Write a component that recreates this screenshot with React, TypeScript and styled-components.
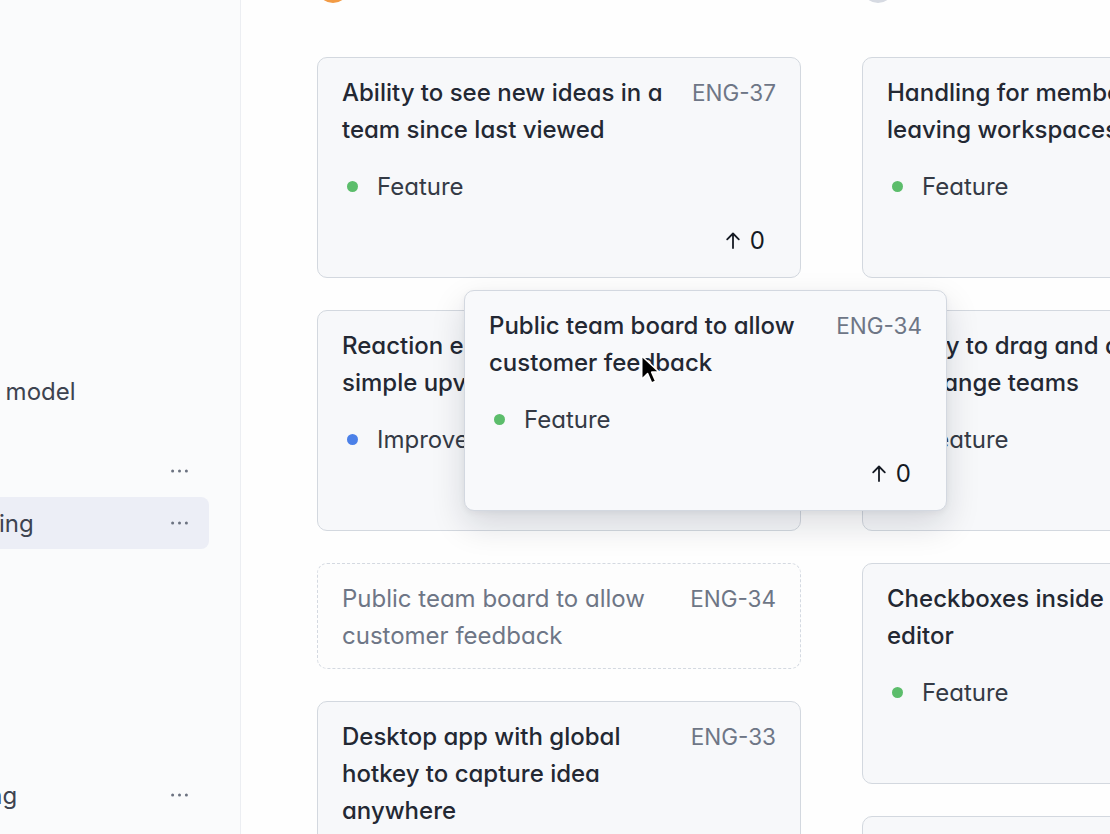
import React from 'react';
import styled, { createGlobalStyle } from 'styled-components';

const Global = createGlobalStyle`
  html, body { margin: 0; padding: 0; background: #fefefe; }
  body { font-family: Inter, "Liberation Sans", sans-serif; -webkit-font-smoothing: antialiased; }
  * { box-sizing: border-box; }
`;

const Shell = styled.div`
  position: relative;
  display: flex;
  width: 1110px;
  height: 834px;
  overflow: hidden;
  font-family: Inter, "Liberation Sans", sans-serif;
  font-feature-settings: "cv11";
`;

const Sidebar = styled.aside`
  flex: 0 0 241px;
  background: #fafbfc;
  border-right: 1px solid #eceef2;
  overflow: hidden;
`;

const Nav = styled.nav`
  margin-left: -95px;
  width: 304px;
  padding-top: 365px;
  display: flex;
  flex-direction: column;
`;

const NavRow = styled.div<{ $active?: boolean; $gap?: number }>`
  display: flex;
  align-items: center;
  justify-content: space-between;
  height: 52px;
  padding: 0 21px 0 26px;
  margin-top: ${(p) => p.$gap ?? 0}px;
  border-radius: 8px;
  background: ${(p) => (p.$active ? '#eceef6' : 'transparent')};
  font-size: 24px;
  color: #3d4350;
  white-space: nowrap;
`;

const Dots = () => (
  <svg width="17" height="4" viewBox="0 0 17 4" fill="#6b7280">
    <circle cx="1.6" cy="2" r="1.5" />
    <circle cx="8.5" cy="2" r="1.5" />
    <circle cx="15.4" cy="2" r="1.5" />
  </svg>
);

const Main = styled.main`
  flex: 1;
  min-width: 0;
  overflow: hidden;
  background: #fefefe;
`;

const Board = styled.div`
  display: flex;
  gap: 61px;
  padding-left: 76px;
  margin-top: -29px;
`;

const Column = styled.section`
  flex: 0 0 484px;
  display: flex;
  flex-direction: column;
`;

const ColumnHeader = styled.header`
  height: 32px;
  display: flex;
  align-items: center;
  margin-bottom: 54px;
`;

const StatusCircle = styled.span<{ $color: string }>`
  width: 32px;
  height: 32px;
  border-radius: 50%;
  background: ${(p) => p.$color};
`;

const CardList = styled.div`
  display: flex;
  flex-direction: column;
  gap: 32px;
`;

const Card = styled.article<{ $ghost?: boolean }>`
  width: 484px;
  padding: 16px 24px ${(p) => (p.$ghost ? 14 : 18)}px;
  border: 1px ${(p) => (p.$ghost ? 'dashed' : 'solid')} ${(p) => (p.$ghost ? '#d4d9e1' : '#d3d8df')};
  border-radius: 10px;
  background: ${(p) => (p.$ghost ? '#fdfdfd' : '#f7f8fa')};
`;

const DragCard = styled(Card)`
  position: absolute;
  left: 464px;
  top: 290px;
  width: 483px;
  background: #f8f9fb;
  border-color: #d3d8e0;
  box-shadow: 0 14px 34px rgba(15, 23, 42, 0.14), 0 2px 6px rgba(15, 23, 42, 0.05);
  z-index: 5;
`;

const CardTop = styled.div`
  display: flex;
  align-items: flex-start;
  gap: 20px;
`;

const Title = styled.h3<{ $ghost?: boolean }>`
  flex: 1;
  margin: 0;
  font-size: 24px;
  line-height: 37px;
  font-weight: ${(p) => (p.$ghost ? 400 : 500)};
  color: ${(p) => (p.$ghost ? '#6e7686' : '#232833')};
`;

const Key = styled.span`
  flex: none;
  font-size: 22.5px;
  line-height: 37px;
  color: #6e7686;
`;

const Tag = styled.div`
  display: flex;
  align-items: center;
  gap: 19px;
  margin-top: 20px;
  padding-left: 5px;
  height: 37px;
  font-size: 24px;
  color: #343a45;
`;

const TagDot = styled.span<{ $color: string }>`
  width: 11px;
  height: 11px;
  border-radius: 50%;
  background: ${(p) => p.$color};
`;

const VoteRow = styled.div`
  display: flex;
  justify-content: flex-end;
  margin-top: 17px;
  padding-right: 11px;
`;

const Vote = styled.span`
  display: flex;
  align-items: center;
  gap: 10px;
  height: 37px;
  font-size: 24px;
  color: #151a23;
`;

const Cursor = styled.svg`
  position: absolute;
  left: 640px;
  top: 354px;
  z-index: 10;
`;

const UpArrow = () => (
  <svg width="14" height="17" viewBox="0 0 14 17" fill="none" stroke="#151a23" strokeWidth="1.8" strokeLinecap="round" strokeLinejoin="round">
    <path d="M7 16V1.5M1.2 7.3L7 1.5l5.8 5.8" />
  </svg>
);

type Idea = { title: string; key: string; tag: string; color: string; ghost?: boolean };

const GREEN = '#5cbd6b';
const BLUE = '#4b80e8';

const col1: Idea[] = [
  { title: 'Ability to see new ideas in a team since last viewed', key: 'ENG-37', tag: 'Feature', color: GREEN },
  { title: 'Reaction emojis instead of simple upvotes', key: 'ENG-36', tag: 'Improvement', color: BLUE },
  { title: 'Public team board to allow customer feedback', key: 'ENG-34', tag: 'Feature', color: GREEN, ghost: true },
  { title: 'Desktop app with global hotkey to capture idea anywhere', key: 'ENG-33', tag: 'Feature', color: GREEN },
];

const col2: Idea[] = [
  { title: 'Handling for members leaving workspaces', key: 'ENG-31', tag: 'Feature', color: GREEN },
  { title: 'Ability to drag and drop to rearrange teams', key: 'ENG-30', tag: 'Feature', color: GREEN },
  { title: 'Checkboxes inside rich text editor', key: 'ENG-28', tag: 'Feature', color: GREEN },
  { title: 'Keyboard shortcuts for moving ideas', key: 'ENG-27', tag: 'Feature', color: GREEN },
];

const IdeaBody = ({ idea }: { idea: Idea }) => (
  <>
    <CardTop>
      <Title $ghost={idea.ghost}>{idea.title}</Title>
      <Key>{idea.key}</Key>
    </CardTop>
    {!idea.ghost && (
      <>
        <Tag>
          <TagDot $color={idea.color} />
          {idea.tag}
        </Tag>
        <VoteRow>
          <Vote>
            <UpArrow />0
          </Vote>
        </VoteRow>
      </>
    )}
  </>
);

const IdeaCard = ({ idea }: { idea: Idea }) => (
  <Card $ghost={idea.ghost}>
    <IdeaBody idea={idea} />
  </Card>
);

export default function App() {
  return (
    <Shell>
      <Global />
      <Sidebar>
        <Nav>
          <NavRow>Billing model</NavRow>
          <NavRow $gap={28}>
            All
            <Dots />
          </NavRow>
          <NavRow $active>
            Branding
            <Dots />
          </NavRow>
          <NavRow $gap={220}>
            Routing
            <Dots />
          </NavRow>
        </Nav>
      </Sidebar>
      <Main>
        <Board>
          <Column>
            <ColumnHeader>
              <StatusCircle $color="#f29b45" />
            </ColumnHeader>
            <CardList>
              {col1.map((i) => (
                <IdeaCard key={i.key} idea={i} />
              ))}
            </CardList>
          </Column>
          <Column>
            <ColumnHeader>
              <StatusCircle $color="#d6dae2" />
            </ColumnHeader>
            <CardList>
              {col2.map((i) => (
                <IdeaCard key={i.key} idea={i} />
              ))}
            </CardList>
          </Column>
        </Board>
      </Main>
      <DragCard>
        <IdeaBody idea={{ title: 'Public team board to allow customer feedback', key: 'ENG-34', tag: 'Feature', color: GREEN }} />
      </DragCard>
      <Cursor width="21" height="32" viewBox="0 0 18 27">
        <path d="M1.5 1.5V21.5L6.5 16.6L10 24.6L13.4 23.1L10 15.3H16.5Z" fill="#000" stroke="#fff" strokeWidth="1.3" strokeLinejoin="round" />
      </Cursor>
    </Shell>
  );
}
